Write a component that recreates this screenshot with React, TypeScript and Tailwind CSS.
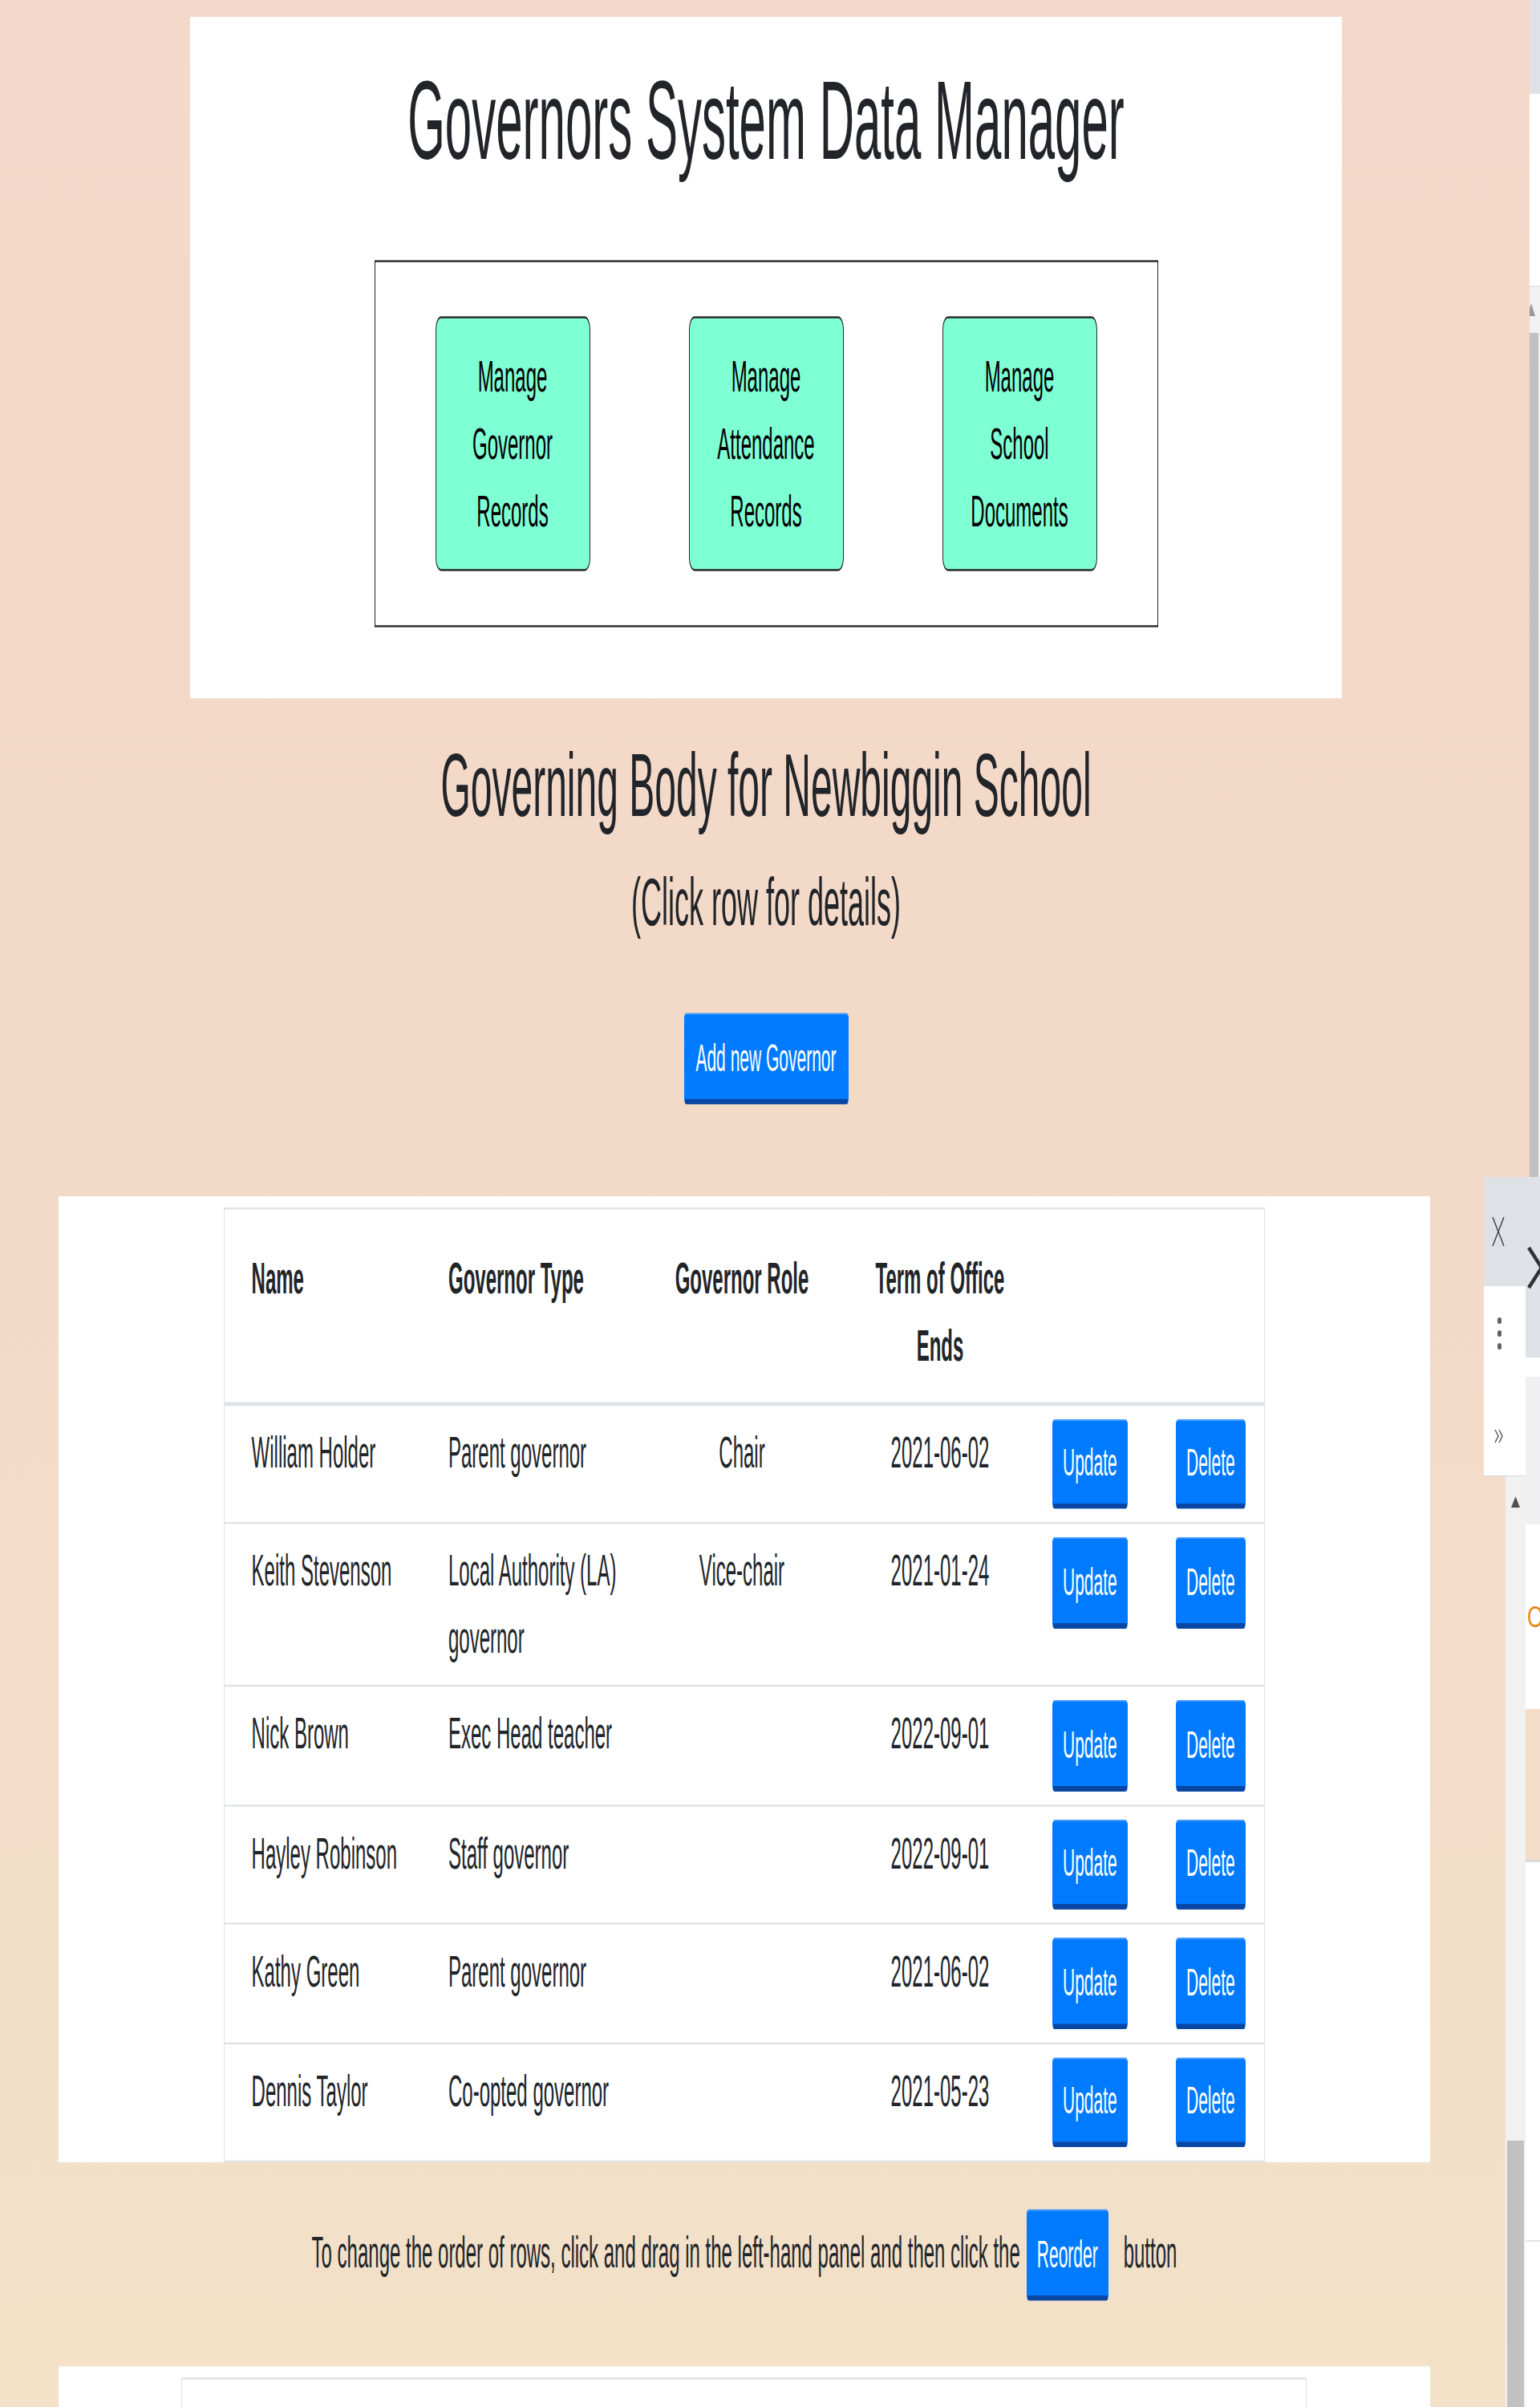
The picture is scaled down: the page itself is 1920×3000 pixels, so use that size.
import React from "react";

const rows = [
  { name: "William Holder", type: "Parent governor", role: "Chair", ends: "2021-06-02" },
  { name: "Keith Stevenson", type: "Local Authority (LA) governor", role: "Vice-chair", ends: "2021-01-24" },
  { name: "Nick Brown", type: "Exec Head teacher", role: "", ends: "2022-09-01" },
  { name: "Hayley Robinson", type: "Staff governor", role: "", ends: "2022-09-01" },
  { name: "Kathy Green", type: "Parent governor", role: "", ends: "2021-06-02" },
  { name: "Dennis Taylor", type: "Co-opted governor", role: "", ends: "2021-05-23" },
];

function Btn({ children, className = "" }: { children: React.ReactNode; className?: string }) {
  return (
    <button
      className={
        "inline-flex items-center justify-center px-[12px] bg-[#007bff] text-white text-[21px] leading-[31.5px] rounded-[3px] border border-[#007bff] border-t-[#3d97ff] border-b-[3px] border-b-[#0a47a3] " +
        className
      }
    >
      {children}
    </button>
  );
}

function Tile({ label }: { label: string }) {
  return (
    <div className="w-[193px] h-[136px] rounded-[7px] border border-[#2a2a2a] bg-[#7fffd4] flex items-center justify-center text-center text-[24px] leading-[36px] text-black px-[16px]">
      {label}
    </div>
  );
}

function Dots() {
  return (
    <div className="flex flex-col gap-[8px]">
      <div className="w-[5px] h-[8px] rounded-full bg-[#5f6368]" />
      <div className="w-[5px] h-[8px] rounded-full bg-[#5f6368]" />
      <div className="w-[5px] h-[8px] rounded-full bg-[#5f6368]" />
    </div>
  );
}

export default function App() {
  return (
    <div className="relative w-[1920px] h-[3000px] overflow-hidden bg-[linear-gradient(180deg,#f4d8c9_0%,#f3d9c8_45%,#f3e1c8_100%)] font-['Liberation_Sans',Arial,sans-serif] text-[#212529]">
      {/* page content, rendered then stretched vertically like the reference */}
      <div className="w-[1907px] origin-top-left [transform:scaleY(2.3333)]">
        <div className="pt-[9px]">
          <section className="ml-[237px] w-[1436px] bg-white pt-[20px] pb-[38px]">
            <h1 className="text-center text-[60px] leading-[72px] font-normal">Governors System Data Manager</h1>
            <div className="mx-auto mt-[37.6px] w-[977px] h-[196px] border border-[#222] flex justify-center items-start gap-[123px] pt-[29px]">
              <Tile label="Manage Governor Records" />
              <Tile label="Manage Attendance Records" />
              <Tile label="Manage School Documents" />
            </div>
          </section>

          <div className="ml-[237px] w-[1436px] text-center">
            <h2 className="mt-[18px] text-[48px] leading-[57.6px] font-normal">Governing Body for Newbiggin School</h2>
            <h4 className="mt-[12px] text-[36px] leading-[43.2px] font-normal">(Click row for details)</h4>
            <div className="mt-[37.5px] flex justify-center">
              <Btn className="h-[49px] w-[205px]">Add new Governor</Btn>
            </div>
          </div>

          <section className="mt-[49.6px] ml-[73px] w-[1710px] bg-white pt-[5.5px]">
            <table className="ml-[205.6px] w-[1296.4px] table-fixed border-separate border-spacing-0 border-x border-t-[1.5px] border-b-[1.5px] border-[#dee2e6] text-[24px] leading-[36px] text-[#212529]">
              <colgroup>
                <col className="w-[272.4px]" />
                <col className="w-[259px]" />
                <col className="w-[228px]" />
                <col className="w-[266px]" />
                <col className="w-[154px]" />
                <col className="w-[117px]" />
              </colgroup>
              <thead>
                <tr>
                  <th className="align-top font-bold text-left pl-[34px] pr-[7px] pt-[19px] pb-[12px] border-b-2 border-[#dee2e6]">Name</th>
                  <th className="align-top font-bold text-left px-[7px] pt-[19px] pb-[12px] border-b-2 border-[#dee2e6]">Governor Type</th>
                  <th className="align-top font-bold text-center px-[7px] pt-[19px] pb-[12px] border-b-2 border-[#dee2e6]">Governor Role</th>
                  <th className="align-top font-bold text-center px-[7px] pt-[19px] pb-[12px] border-b-2 border-[#dee2e6]">
                    <div className="mx-auto w-[180px]">Term of Office Ends</div>
                  </th>
                  <th className="border-b-2 border-[#dee2e6]"></th>
                  <th className="border-b-2 border-[#dee2e6]"></th>
                </tr>
              </thead>
              <tbody>
                {rows.map((r, i) => {
                  const bt = i === 0 ? "" : " border-t-[1.5px] border-[#dee2e6]";
                  return (
                    <tr key={r.name}>
                      <td className={"align-top pl-[34px] pr-[7px] py-[7px]" + bt}>{r.name}</td>
                      <td className={"align-top px-[7px] py-[7px]" + bt}>{r.type}</td>
                      <td className={"align-top text-center px-[7px] py-[7px]" + bt}>{r.role}</td>
                      <td className={"align-top text-center px-[7px] py-[7px]" + bt}>{r.ends}</td>
                      <td className={"align-top pl-[7px] py-[7px]" + bt}>
                        <Btn className="h-[48.5px]">Update</Btn>
                      </td>
                      <td className={"align-top pl-[7px] py-[7px]" + bt}>
                        <Btn className="h-[48.5px]">Delete</Btn>
                      </td>
                    </tr>
                  );
                })}
              </tbody>
            </table>
          </section>

          <div className="ml-[73px] w-[1710px] flex justify-center items-baseline pt-[24.4px] pb-[35.6px] text-[24px] leading-[36px]">
            <span>To change the order of rows, click and drag in the left-hand panel and then click the</span>
            <Btn className="ml-[8px] h-[49px]">Reorder</Btn>
            <span className="ml-[19px]">button</span>
          </div>

          <section className="ml-[73px] w-[1710px] bg-white h-[60px] pt-[6px]">
            <div className="ml-[153px] w-[1403px] h-[60px] border-x border-t-[1.5px] border-[#dee2e6]" />
          </section>
        </div>
      </div>

      {/* browser chrome remnants: outer scrollbar strip */}
      <div className="absolute left-[1907px] top-0 w-[13px] flex flex-col">
        <div className="h-[117px] bg-[#dee1e6]" />
        <div className="h-[240px] bg-white border-b border-[#dadce0]" />
        <div className="h-[58px] bg-[#f1f1f1] flex items-start pt-[19px]">
          <svg width="8" height="20" viewBox="4 0 8 20">
            <polygon points="6,2 11,18 1,18" fill="#9a9a9a" />
          </svg>
        </div>
        <div className="h-[1052px] flex">
          <div className="w-[11px] bg-[#c1c1c1]" />
          <div className="w-[2px] bg-[#f1f1f1]" />
        </div>
      </div>

      {/* floating side panel and inner page fragment */}
      <div className="absolute left-[1850px] top-[1467px] w-[70px] h-[1533px] flex">
        <div className="w-[52px] flex flex-col">
          <div className="h-[136px] w-[60px] bg-[#dee1e6] flex items-center pl-[10px]">
            <svg width="16" height="38" viewBox="0 0 16 38">
              <line x1="1" y1="1" x2="15" y2="37" stroke="#3c4043" strokeWidth="1.4" />
              <line x1="15" y1="1" x2="1" y2="37" stroke="#3c4043" strokeWidth="1.4" />
            </svg>
          </div>
          <div className="h-[237px] bg-white border-b border-[#d5d8dc] flex flex-col items-start pl-[17px] pt-[39px]">
            <Dots />
            <svg className="mt-[98px] -ml-[4px]" width="12" height="20" viewBox="0 0 12 20">
              <polyline points="1,2 5,10 1,18" fill="none" stroke="#5f6368" strokeWidth="1.6" />
              <polyline points="6,2 10,10 6,18" fill="none" stroke="#5f6368" strokeWidth="1.6" />
            </svg>
          </div>
          <div className="flex-1 flex">
            <div className="w-[27px]" />
            <div className="w-[25px] bg-[#f1f1f1] flex flex-col items-center pt-[24px]">
              <svg width="13" height="16" viewBox="0 0 13 16">
                <polygon points="6.5,1 12,15 1,15" fill="#505050" />
              </svg>
              <div className="mt-auto w-[21px] h-[332px] bg-[#c1c1c1]" />
            </div>
          </div>
        </div>
        <div className="w-[18px] flex flex-col overflow-hidden">
          <div className="h-[225px] bg-[#dee1e6] flex items-start pt-[86px] pl-[2px]">
            <svg className="shrink-0" width="36" height="54" viewBox="0 0 36 54">
              <line x1="2" y1="2" x2="34" y2="52" stroke="#2f3337" strokeWidth="4.5" />
              <line x1="2" y1="52" x2="34" y2="2" stroke="#2f3337" strokeWidth="4.5" />
            </svg>
          </div>
          <div className="h-[24px] bg-white" />
          <div className="h-[184px] bg-[#f0f0f2]" />
          <div className="h-[230px] bg-white flex items-center pl-[2px] overflow-hidden">
            <span className="whitespace-nowrap text-[26px] leading-[40px] text-[#3b78e7] [transform:scaleY(1.4)]">
              <span className="text-[#e8891c]">O</span>U
            </span>
          </div>
          <div className="h-[188px] bg-[#f3dcc8]" />
          <div className="h-[474px] bg-white border-t-[3px] border-[#d9d9d9]" />
          <div className="h-[2px] bg-[#e3e3e3]" />
          <div className="flex-1 bg-white" />
        </div>
      </div>
    </div>
  );
}
